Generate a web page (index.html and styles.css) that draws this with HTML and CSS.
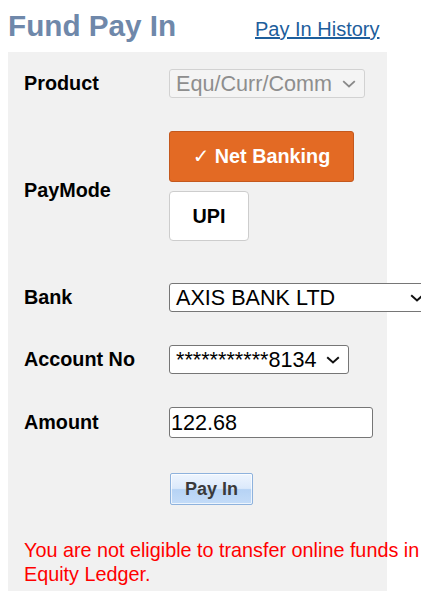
FILE: index.html
```html
<!DOCTYPE html>
<html>
<head>
<meta charset="utf-8">
<link rel="stylesheet" href="styles.css">
</head>
<body>
<div class="header">
  <h1 class="title">Fund Pay In</h1>
  <a class="history" href="#">Pay In History</a>
</div>
<div class="panel">
  <div class="form">
    <div class="label">Product</div>
    <div class="cell">
      <div class="select disabled"><span>Equ/Curr/Comm</span><svg class="chev" width="14" height="8" viewBox="0 0 14 8"><path d="M1.2 1.2 L7 6.5 L12.8 1.2" fill="none" stroke="#8a8a8a" stroke-width="1.8"/></svg></div>
    </div>

    <div class="label">PayMode</div>
    <div class="cell paymodes">
      <button class="mode active">&#10003; Net Banking</button>
      <button class="mode upi">UPI</button>
    </div>

    <div class="label">Bank</div>
    <div class="cell">
      <div class="select bank"><span>AXIS BANK LTD</span><svg class="chev" width="14" height="8" viewBox="0 0 14 8"><path d="M1.2 1.2 L7 6.5 L12.8 1.2" fill="none" stroke="#111" stroke-width="2"/></svg></div>
    </div>

    <div class="label">Account No</div>
    <div class="cell">
      <div class="select"><span>***********8134</span><svg class="chev" width="14" height="8" viewBox="0 0 14 8"><path d="M1.2 1.2 L7 6.5 L12.8 1.2" fill="none" stroke="#111" stroke-width="2"/></svg></div>
    </div>

    <div class="label">Amount</div>
    <div class="cell">
      <input class="amount" type="text" value="122.68">
    </div>

    <div class="label"></div>
    <div class="cell">
      <button class="payin">Pay In</button>
    </div>

    <div class="message">You are not eligible to transfer online funds in Equity Ledger.</div>
  </div>
</div>
</body>
</html>
```
FILE: styles.css
```css
html {
  overflow: hidden;
}
body {
  margin: 8px;
  font-family: "Liberation Sans", Arial, sans-serif;
  background: #fff;
  color: #000;
}
.header {
  display: grid;
  grid-template-columns: 247px auto;
  align-items: baseline;
  height: 44px;
  padding-top: 1px;
  box-sizing: border-box;
}
.title {
  margin: 0;
  font-size: 29.7px;
  line-height: 1.15;
  font-weight: bold;
  color: #6f88aa;
}
.history {
  font-size: 20px;
  color: #1d5e9c;
  text-decoration: underline;
}
.panel {
  width: 379px;
  background: #f1f1f1;
  padding: 17px 0 12px 16px;
  box-sizing: border-box;
}
.form {
  display: grid;
  grid-template-columns: 145px 264px;
  row-gap: 33px;
  align-items: center;
}
.label {
  font-size: 19.8px;
  font-weight: bold;
}
.cell {
  display: flex;
  align-items: center;
}
.select {
  display: inline-flex;
  align-items: center;
  gap: 10px;
  height: 29px;
  box-sizing: border-box;
  border: 1px solid #767676;
  border-radius: 3px;
  background: #fff;
  padding: 0 8px 0 6px;
  font-size: 21.6px;
  line-height: 1;
  color: #000;
  white-space: nowrap;
}
.select.disabled {
  border-color: #d2d2d2;
  background: #f4f4f4;
  color: #8e8e8e;
}
.select.bank {
  width: 264px;
  justify-content: space-between;
}
.chev {
  flex: none;
}
.paymodes {
  flex-direction: column;
  align-items: flex-start;
}
.mode {
  font-family: "Liberation Sans", "DejaVu Sans", sans-serif;
  font-size: 19.8px;
  font-weight: bold;
  box-sizing: border-box;
  border-radius: 3px;
  margin: 0 0 9px 0;
  padding: 0;
}
.mode.active {
  width: 185px;
  height: 51px;
  background: #e36a24;
  border: 1px solid #c4581d;
  color: #fff;
}
.mode.upi {
  width: 80px;
  height: 50px;
  background: #fff;
  border: 1px solid #cdcdcd;
  border-radius: 4px;
  color: #000;
}
.amount {
  width: 204px;
  height: 31px;
  box-sizing: border-box;
  border: 1px solid #767676;
  border-radius: 3px;
  padding: 0 1px;
  font-family: "Liberation Sans", Arial, sans-serif;
  font-size: 21.6px;
  color: #000;
  background: #fff;
  outline: none;
}
.payin {
  margin: 2px 0 0 1px;
  width: 83px;
  height: 32px;
  box-sizing: border-box;
  border: 1px solid #8eb2dd;
  border-radius: 2px;
  background: linear-gradient(#eef5fe 0%, #dbe9fb 48%, #b6d3f5 52%, #c4dcf8 100%);
  box-shadow: inset 0 0 0 1px rgba(255, 255, 255, 0.7);
  font-family: "Liberation Sans", Arial, sans-serif;
  font-size: 18px;
  font-weight: bold;
  color: #3a3a3a;
  padding: 0;
}
.message {
  grid-column: 1 / 3;
  color: #ff0000;
  font-size: 19.8px;
  line-height: 24px;
}
```
